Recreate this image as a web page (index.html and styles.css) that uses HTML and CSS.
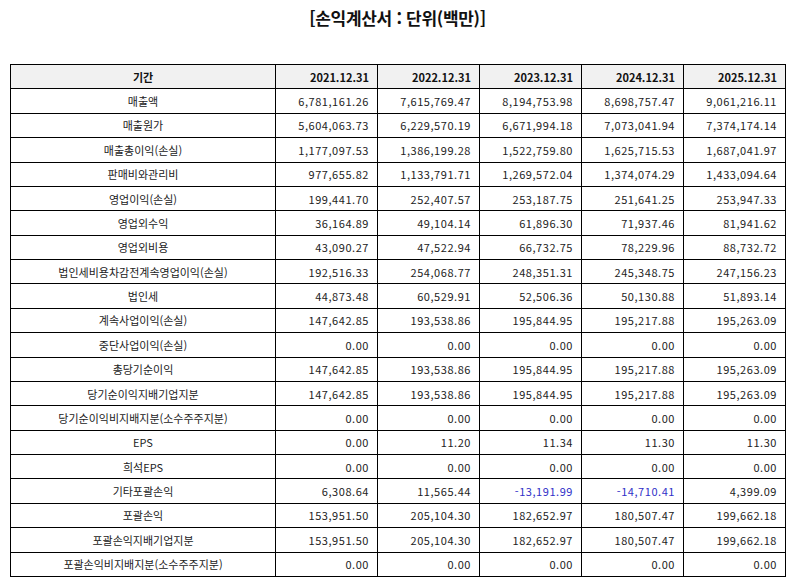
FILE: index.html
```html
<!DOCTYPE html>
<html lang="ko">
<head>
<meta charset="utf-8">
<title>손익계산서</title>
<link rel="stylesheet" href="styles.css">
</head>
<body>
<div class="page">
  <h1 class="title">[손익계산서 : 단위(백만)]</h1>
  <table class="fin">
    <thead>
      <tr><th class="label">기간</th><th>2021.12.31</th><th>2022.12.31</th><th>2023.12.31</th><th>2024.12.31</th><th>2025.12.31</th></tr>
    </thead>
    <tbody>
      <tr><td class="label">매출액</td><td>6,781,161.26</td><td>7,615,769.47</td><td>8,194,753.98</td><td>8,698,757.47</td><td>9,061,216.11</td></tr>
      <tr><td class="label">매출원가</td><td>5,604,063.73</td><td>6,229,570.19</td><td>6,671,994.18</td><td>7,073,041.94</td><td>7,374,174.14</td></tr>
      <tr><td class="label">매출총이익(손실)</td><td>1,177,097.53</td><td>1,386,199.28</td><td>1,522,759.80</td><td>1,625,715.53</td><td>1,687,041.97</td></tr>
      <tr><td class="label">판매비와관리비</td><td>977,655.82</td><td>1,133,791.71</td><td>1,269,572.04</td><td>1,374,074.29</td><td>1,433,094.64</td></tr>
      <tr><td class="label">영업이익(손실)</td><td>199,441.70</td><td>252,407.57</td><td>253,187.75</td><td>251,641.25</td><td>253,947.33</td></tr>
      <tr><td class="label">영업외수익</td><td>36,164.89</td><td>49,104.14</td><td>61,896.30</td><td>71,937.46</td><td>81,941.62</td></tr>
      <tr><td class="label">영업외비용</td><td>43,090.27</td><td>47,522.94</td><td>66,732.75</td><td>78,229.96</td><td>88,732.72</td></tr>
      <tr><td class="label">법인세비용차감전계속영업이익(손실)</td><td>192,516.33</td><td>254,068.77</td><td>248,351.31</td><td>245,348.75</td><td>247,156.23</td></tr>
      <tr><td class="label">법인세</td><td>44,873.48</td><td>60,529.91</td><td>52,506.36</td><td>50,130.88</td><td>51,893.14</td></tr>
      <tr><td class="label">계속사업이익(손실)</td><td>147,642.85</td><td>193,538.86</td><td>195,844.95</td><td>195,217.88</td><td>195,263.09</td></tr>
      <tr><td class="label">중단사업이익(손실)</td><td>0.00</td><td>0.00</td><td>0.00</td><td>0.00</td><td>0.00</td></tr>
      <tr><td class="label">총당기순이익</td><td>147,642.85</td><td>193,538.86</td><td>195,844.95</td><td>195,217.88</td><td>195,263.09</td></tr>
      <tr><td class="label">당기순이익지배기업지분</td><td>147,642.85</td><td>193,538.86</td><td>195,844.95</td><td>195,217.88</td><td>195,263.09</td></tr>
      <tr><td class="label">당기순이익비지배지분(소수주주지분)</td><td>0.00</td><td>0.00</td><td>0.00</td><td>0.00</td><td>0.00</td></tr>
      <tr><td class="label">EPS</td><td>0.00</td><td>11.20</td><td>11.34</td><td>11.30</td><td>11.30</td></tr>
      <tr><td class="label">희석EPS</td><td>0.00</td><td>0.00</td><td>0.00</td><td>0.00</td><td>0.00</td></tr>
      <tr><td class="label">기타포괄손익</td><td>6,308.64</td><td>11,565.44</td><td class="neg">-13,191.99</td><td class="neg">-14,710.41</td><td>4,399.09</td></tr>
      <tr><td class="label">포괄손익</td><td>153,951.50</td><td>205,104.30</td><td>182,652.97</td><td>180,507.47</td><td>199,662.18</td></tr>
      <tr><td class="label">포괄손익지배기업지분</td><td>153,951.50</td><td>205,104.30</td><td>182,652.97</td><td>180,507.47</td><td>199,662.18</td></tr>
      <tr><td class="label">포괄손익비지배지분(소수주주지분)</td><td>0.00</td><td>0.00</td><td>0.00</td><td>0.00</td><td>0.00</td></tr>
    </tbody>
  </table>
</div>
</body>
</html>
```

FILE: styles.css
```css
html, body {
  margin: 0;
  padding: 0;
  background: #ffffff;
}

body {
  font-family: "Noto Sans CJK KR", "Noto Sans", sans-serif;
  color: #111111;
}

.page {
  padding: 5px 9px 0 10px;
}

.title {
  margin: 0 0 33px 0;
  text-align: center;
  font-size: 17px;
  font-weight: 700;
  line-height: 26px;
  color: #111111;
  letter-spacing: -0.3px;
}

.fin {
  width: 776px;
  border-collapse: collapse;
  table-layout: fixed;
  font-size: 11px;
}

.fin tr {
  height: 24.38px;
}

.fin th,
.fin td {
  border: 1px solid #000000;
  padding: 0 8px 0 4px;
  text-align: right;
  line-height: 14px;
}

.fin td {
  letter-spacing: 0.55px;
  color: #222222;
}

.fin th {
  background: #f1f1f1;
  font-weight: 700;
}

.fin .label {
  width: 256px;
  text-align: center;
  padding: 0 4px;
  letter-spacing: 0;
}

.fin td.neg {
  color: #3030c8;
}
```
